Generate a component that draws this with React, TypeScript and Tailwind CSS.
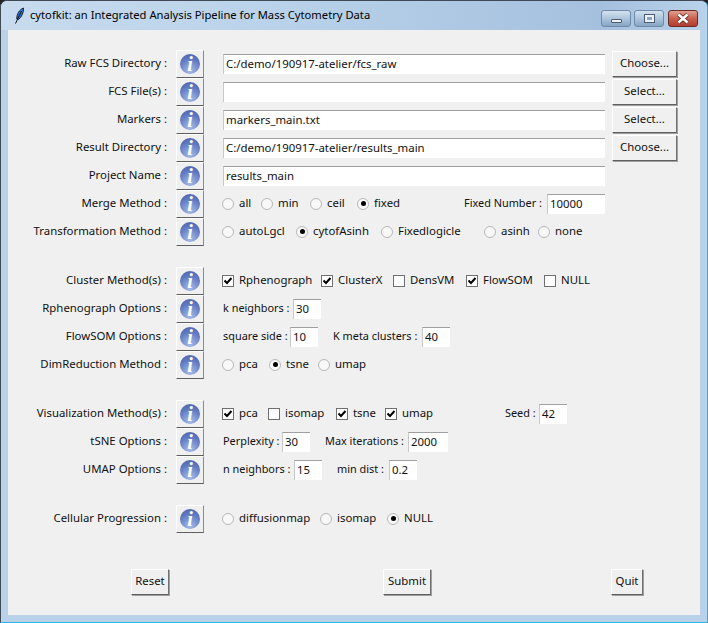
const font = { fontFamily: '"Noto Sans", Tahoma, sans-serif' }

function Info() {
  return (
    <button className="w-[28px] h-[28px] shrink-0 flex items-center justify-center bg-[#f0f0f0] border border-t-white border-l-white border-r-[#8a8a8a] border-b-[#5e5e5e]">
      <span className="w-[20px] h-[20px] rounded-full bg-[radial-gradient(circle_at_50%_85%,#a6bcea,#5f78c0_62%,#4a60a8)] flex items-center justify-center text-white text-[20px] leading-none font-bold italic [font-family:'Liberation_Serif',serif]">
        i
      </span>
    </button>
  )
}

function Entry({ value, className }: { value?: string; className: string }) {
  return (
    <div className={`h-[20px] shrink-0 bg-white border-t border-l border-t-[#a0a0a0] border-l-[#c8c8c8] pl-[2px] pb-[2px] flex items-center text-[11.4px] text-[#111] whitespace-nowrap ${className}`}>
      {value}
    </div>
  )
}

function TkButton({ label, className }: { label: string; className: string }) {
  return (
    <button className={`h-[26px] shrink-0 bg-[#f0f0f0] border border-t-white border-l-white border-r-[#707070] border-b-[#606060] shadow-[1px_1px_0_#a0a0a0] pb-[2px] text-[11.4px] text-[#111] flex items-center justify-center ${className}`}>
      {label}
    </button>
  )
}

function Radio({ label, on, className = "" }: { label: string; on?: boolean; className?: string }) {
  return (
    <div className={`flex items-center gap-[5px] ${className}`}>
      <span className="w-[12px] h-[12px] rounded-full bg-[#f8f8f8] border border-[#b8b8b8] flex items-center justify-center">
        {on && <span className="w-[5px] h-[5px] rounded-full bg-black" />}
      </span>
      <span className="pb-[2px]">{label}</span>
    </div>
  )
}

function Check({ label, on, className = "" }: { label: string; on?: boolean; className?: string }) {
  return (
    <div className={`flex items-center gap-[5px] ${className}`}>
      <span className="w-[12px] h-[12px] bg-white border border-[#707070] flex items-center justify-center">
        {on && (
          <svg width="8" height="8" viewBox="0 0 8 8">
            <path d="M0.5 3.5 L3 6 L7.5 1" fill="none" stroke="#000" strokeWidth="2" />
          </svg>
        )}
      </span>
      <span className="pb-[2px]">{label}</span>
    </div>
  )
}

function Caption({ label, className }: { label: string; className: string }) {
  return <span className={`shrink-0 pb-[2px] text-[10.9px] ${className}`}>{label}</span>
}

function Row({ label, children, className = "" }: { label: string; children?: React.ReactNode; className?: string }) {
  return (
    <div className={`flex items-center h-[28px] ${className}`}>
      <div className="w-[160px] pr-[1px] pb-[2px] text-right whitespace-nowrap shrink-0">{label}</div>
      <div className="ml-[8px]"><Info /></div>
      <div className="flex items-center ml-[19px] whitespace-nowrap">{children}</div>
    </div>
  )
}

function Feather() {
  return (
    <svg width="12" height="18" viewBox="0 0 12 18" className="shrink-0">
      <path d="M9.5 1 C5.5 2.5 2.5 7 2.8 12 L4.5 12.5 C7.5 10 9.8 6 9.5 1 Z" fill="#2f74d0" stroke="#16263a" strokeWidth="1" />
      <path d="M7.5 4 L1.5 16.5" stroke="#111" strokeWidth="1" fill="none" />
    </svg>
  )
}

function WinButton({ children, className }: { children: React.ReactNode; className: string }) {
  return (
    <div className={`w-[30px] h-[17px] rounded-[3px] border flex items-center justify-center ${className}`}>
      {children}
    </div>
  )
}

export default function App() {
  return (
    <div className="bg-[#222]">
      <div style={font} className="w-[708px] h-[623px] bg-[#b9d2ea] border border-[#3f4a55] border-r-[#2ab4e0] border-b-[#2ab4e0] rounded-t-[7px] flex flex-col overflow-hidden text-[11.4px] text-[#111]">
        <div className="h-[29px] shrink-0 flex items-center pl-[13px] bg-[linear-gradient(to_right,#c8dbee,#b9d2ea_40%,#a5c0de_85%,#b9d2ea)]">
          <Feather />
          <span className="ml-[4px] pb-[1px] text-[11.2px] text-black">cytofkit: an Integrated Analysis Pipeline for Mass Cytometry Data</span>
          <div className="ml-auto mr-[9px] flex self-start mt-[9px] gap-[3px]">
            <WinButton className="border-[#6f8aa8] bg-[linear-gradient(to_bottom,#d3e1ef,#aec5dc_50%,#86a4c4)]">
              <span className="w-[11px] h-[4px] mt-[5px] bg-[#eef2f7] border border-[#4a5a70] rounded-[1px]" />
            </WinButton>
            <WinButton className="border-[#6f8aa8] bg-[linear-gradient(to_bottom,#d3e1ef,#aec5dc_50%,#86a4c4)]">
              <span className="w-[9px] h-[7px] bg-[#86a4c4] border-2 border-[#eef2f7] outline outline-1 outline-[#4a5a70]" />
            </WinButton>
            <WinButton className="border-[#6e2a22] bg-[linear-gradient(to_bottom,#e0a090,#c9604f_50%,#b23e30)] ml-[1px]">
              <svg width="14" height="11" viewBox="0 0 14 11">
                <path d="M2.5 1.5 L11.5 9.5 M11.5 1.5 L2.5 9.5" stroke="#4a1c18" strokeWidth="4" />
                <path d="M2.5 1.5 L11.5 9.5 M11.5 1.5 L2.5 9.5" stroke="#fff" strokeWidth="2.6" />
              </svg>
            </WinButton>
          </div>
        </div>
        <div className="mx-[7px] h-[585px] bg-[#f0f0f0] pt-[20px]">
          <Row label="Raw FCS Directory :">
            <Entry className="w-[382px]" value="C:/demo/190917-atelier/fcs_raw" />
            <TkButton className="w-[65px] ml-[7px]" label="Choose..." />
          </Row>
          <Row label="FCS File(s) :">
            <Entry className="w-[382px]" />
            <TkButton className="w-[65px] ml-[7px]" label="Select..." />
          </Row>
          <Row label="Markers :">
            <Entry className="w-[382px]" value="markers_main.txt" />
            <TkButton className="w-[65px] ml-[7px]" label="Select..." />
          </Row>
          <Row label="Result Directory :">
            <Entry className="w-[382px]" value="C:/demo/190917-atelier/results_main" />
            <TkButton className="w-[65px] ml-[7px]" label="Choose..." />
          </Row>
          <Row label="Project Name :">
            <Entry className="w-[382px]" value="results_main" />
          </Row>
          <Row label="Merge Method :">
            <Radio label="all" className="w-[39px] -ml-[1px]" />
            <Radio label="min" className="w-[49px]" />
            <Radio label="ceil" className="w-[47px]" />
            <Radio label="fixed" on className="w-[107px]" />
            <Caption label="Fixed Number :" className="w-[80px]" />
            <Entry className="w-[58px] ml-[3px]" value="10000" />
          </Row>
          <Row label="Transformation Method :">
            <Radio label="autoLgcl" className="w-[74px] -ml-[1px]" />
            <Radio label="cytofAsinh" on className="w-[85px]" />
            <Radio label="Fixedlogicle" className="w-[103px]" />
            <Radio label="asinh" className="w-[54px]" />
            <Radio label="none" />
          </Row>

          <Row label="Cluster Method(s) :" className="mt-[21px]">
            <Check label="Rphenograph" on className="w-[99px] -ml-[1px]" />
            <Check label="ClusterX" on className="w-[72px]" />
            <Check label="DensVM" className="w-[73px]" />
            <Check label="FlowSOM" on className="w-[78px]" />
            <Check label="NULL" />
          </Row>
          <Row label="Rphenograph Options :">
            <Caption label="k neighbors :" className="w-[67px]" />
            <Entry className="w-[28px] ml-[3px]" value="30" />
          </Row>
          <Row label="FlowSOM Options :">
            <Caption label="square side :" className="w-[64px]" />
            <Entry className="w-[28px] ml-[3px]" value="10" />
            <Caption label="K meta clusters :" className="w-[86px] ml-[15px]" />
            <Entry className="w-[28px] ml-[3px]" value="40" />
          </Row>
          <Row label="DimReduction Method :">
            <Radio label="pca" className="w-[47px] -ml-[1px]" />
            <Radio label="tsne" on className="w-[49px]" />
            <Radio label="umap" />
          </Row>

          <Row label="Visualization Method(s) :" className="mt-[21px]">
            <Check label="pca" on className="w-[46px] -ml-[1px]" />
            <Check label="isomap" className="w-[68px]" />
            <Check label="tsne" on className="w-[49px]" />
            <Check label="umap" on className="w-[120px]" />
            <Caption label="Seed :" className="w-[31px]" />
            <Entry className="w-[28px] ml-[3px]" value="42" />
          </Row>
          <Row label="tSNE Options :">
            <Caption label="Perplexity :" className="w-[57px]" />
            <Entry className="w-[28px] ml-[2px]" value="30" />
            <Caption label="Max iterations :" className="w-[81px] ml-[15px]" />
            <Entry className="w-[40px] ml-[2px]" value="2000" />
          </Row>
          <Row label="UMAP Options :">
            <Caption label="n neighbors :" className="w-[68px]" />
            <Entry className="w-[28px] ml-[3px]" value="15" />
            <Caption label="min dist :" className="w-[49px] ml-[15px]" />
            <Entry className="w-[28px] ml-[3px]" value="0.2" />
          </Row>

          <Row label="Cellular Progression :" className="mt-[21px]">
            <Radio label="diffusionmap" className="w-[98px] -ml-[1px]" />
            <Radio label="isomap" className="w-[67px]" />
            <Radio label="NULL" on />
          </Row>

          <div className="flex mt-[36px]">
            <TkButton className="w-[38px] ml-[123px]" label="Reset" />
            <TkButton className="w-[48px] ml-[214px]" label="Submit" />
            <TkButton className="w-[32px] ml-[180px]" label="Quit" />
          </div>
        </div>
      </div>
    </div>
  )
}
